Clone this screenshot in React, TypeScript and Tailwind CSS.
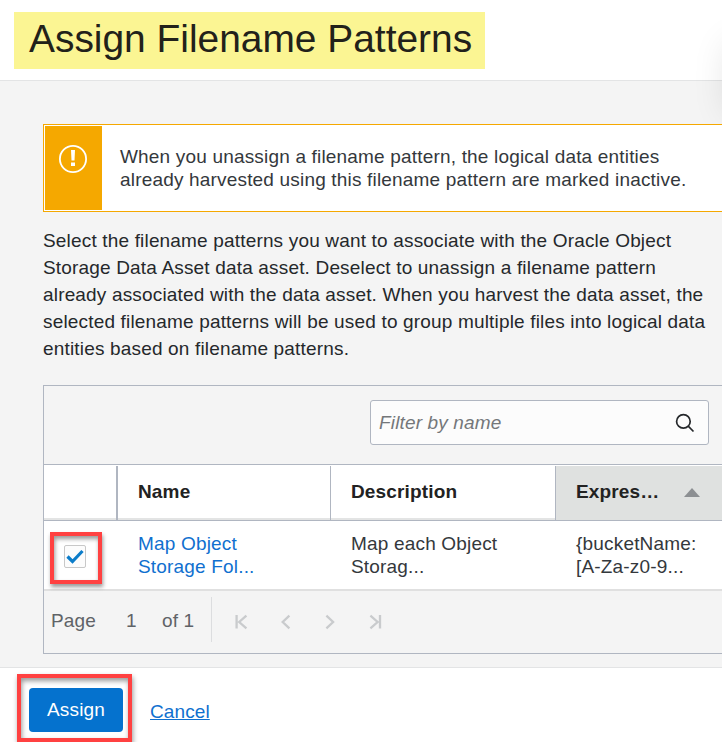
import React from "react";

const cell = "text-[19px] leading-[23px] tracking-[0.18px]";

function PagerIcon({ kind }: { kind: "first" | "prev" | "next" | "last" }) {
  const paths = {
    first: "M2.6 2V15.6M12.4 2.7L5.2 9L12.4 15.3",
    prev: "M10.4 2.7L3.7 9L10.4 15.3",
    next: "M2.4 2.7L9.1 9L2.4 15.3",
    last: "M1.4 2.7L8.6 9L1.4 15.3M11 2V15.6",
  };
  return (
    <svg width="14" height="17" viewBox="0 0 14 17" fill="none" stroke="#c9cbcd" strokeWidth="2.3">
      <path d={paths[kind]} />
    </svg>
  );
}

export default function App() {
  return (
    <div className="relative flex h-[742px] w-[722px] flex-col overflow-hidden bg-[#f4f4f4] font-['Liberation_Sans',Arial,sans-serif] text-[#34383c]">
      <header className="h-[81px] shrink-0 border-b border-[#e3e4e5] bg-white pt-3 pl-3.5">
        <h1 className="h-[57px] w-[471px] bg-[#fbf593] pl-[15px] text-[38.9px] leading-[53px] whitespace-nowrap text-[#22211a]">
          Assign Filename Patterns
        </h1>
      </header>
      <div className="pointer-events-none absolute top-[44px] left-[728px] h-[70px] w-20 shadow-[0_0_36px_rgba(0,0,0,0.12)]" />

      <main className="flex h-[586px] shrink-0 flex-col pt-[43px] pl-[43px]">
        <section className="relative flex h-[88px] shrink-0 border border-r-0 border-[#f5a800] bg-white py-px pl-px">
          <div className="w-[57px] shrink-0 bg-[#f5a800] pt-[19px] pl-3.5">
            <svg width="28" height="28" viewBox="0 0 28 28" fill="none">
              <circle cx="14" cy="14" r="13.1" stroke="white" strokeWidth="1.8" />
              <path d="M12 5H16L15.5 15.5H12.5ZM12 17.5H16V21H12Z" fill="white" />
            </svg>
          </div>
          <p className={`${cell} pt-[19px] pl-[18px] whitespace-nowrap`}>
            When you unassign a filename pattern, the logical data entities
            <br />
            already harvested using this filename pattern are marked inactive.
          </p>
        </section>

        <p className="mt-[15px] h-[135px] shrink-0 text-[19px] leading-[27px] tracking-[0.17px] whitespace-nowrap text-[#25282b]">
          Select the filename patterns you want to associate with the Oracle Object
          <br />
          Storage Data Asset data asset. Deselect to unassign a filename pattern
          <br />
          already associated with the data asset. When you harvest the data asset, the
          <br />
          selected filename patterns will be used to group multiple files into logical data
          <br />
          entities based on filename patterns.
        </p>

        <section className="mt-[23px] flex h-[269px] shrink-0 flex-col border border-r-0 border-[#b0b6c1]">
          <div className="flex h-[79px] shrink-0 justify-end border-b border-[#b0b6c1] pt-3.5 pr-[13px]">
            <div className="flex h-[45px] w-[339px] items-center justify-between rounded-[3px] border border-[#b0b6c1] bg-[#fcfcfc] pr-[13px] pl-2">
              <span className="pt-0.5 text-[19px] tracking-[0.15px] text-[#74777a] italic">Filter by name</span>
              <svg width="20" height="20" viewBox="0 0 20 20" fill="none" stroke="#25282b" strokeWidth="1.7">
                <circle cx="8.4" cy="8.4" r="6.8" />
                <path d="M13.2 13.2L18.5 18.5" />
              </svg>
            </div>
          </div>

          <div className="flex h-14 shrink-0 border-b border-[#b0b6c1] bg-white pt-px text-[19px] leading-[51px] font-bold tracking-[0.15px] text-[#222]">
            <div className="w-[74px] border-r-2 border-[#b0b6c1]">
              <div className="h-full border-b-2 border-[#e3e4e4]" />
            </div>
            <div className="w-[213px] border-r border-[#b0b6c1]">
              <div className="h-full border-b-2 border-[#e3e4e4] pl-5">Name</div>
            </div>
            <div className="w-[225px] border-r border-[#b0b6c1]">
              <div className="h-full border-b-2 border-[#e3e4e4] pl-5">Description</div>
            </div>
            <div className="flex flex-1 justify-between bg-[#dfe1e0] pr-[22px] pl-5">
              <span>Expres…</span>
              <svg className="mt-[22px]" width="16" height="9" viewBox="0 0 16 9">
                <path d="M8 0L16 9H0Z" fill="#8c8f92" />
              </svg>
            </div>
          </div>

          <div className="flex h-[70px] shrink-0 border-b-2 border-[#e0e0e0] bg-white">
            <div className="w-[74px] pt-[11px] pl-1.5">
              <div className="flex h-[52px] w-[52px] items-center justify-center border-4 border-[#ff4141] shadow-[1px_3px_4px_rgba(0,0,0,0.4),inset_1px_3px_4px_rgba(0,0,0,0.4)]">
                <div className="mr-0.5 mb-[3px] flex h-[23px] w-[22px] items-center justify-center rounded-[2px] border border-[#c8c8c8] bg-[#fcfcfc]">
                  <svg width="18" height="16" viewBox="0 0 18 16" fill="none" stroke="#0b7cc9" strokeWidth="3.2">
                    <path d="M1.5 7.5L6.5 12.5L16.5 2" />
                  </svg>
                </div>
              </div>
            </div>
            <div className={`${cell} w-[213px] pt-[11px] pl-5 text-[#1070cf]`}>
              Map Object
              <br />
              Storage Fol...
            </div>
            <div className={`${cell} w-[225px] pt-[11px] pl-5`}>
              Map each Object
              <br />
              Storag...
            </div>
            <div className={`${cell} flex-1 pt-[11px] pl-5`}>
              {"{bucketName:"}
              <br />
              [A-Za-z0-9...
            </div>
          </div>

          <div className="flex flex-1 pt-1.5 text-[19px] leading-[47px] tracking-[0.15px] text-[#5f6367]">
            <span className="w-[74px] pl-[7px]">Page</span>
            <span className="w-9 pl-2">1</span>
            <span className="w-[57px] pl-2">of 1</span>
            <div className="flex h-[45px] items-start gap-[31px] border-l border-[#dcdddf] pt-4 pl-[22px]">
              <PagerIcon kind="first" />
              <PagerIcon kind="prev" />
              <PagerIcon kind="next" />
              <PagerIcon kind="last" />
            </div>
          </div>
        </section>
      </main>

      <footer className="flex h-[75px] shrink-0 border-t border-[#e3e4e5] bg-white pt-1.5 pl-[17px]">
        <div className="h-[68px] w-[115px] shrink-0 border-4 border-[#ff4141] pt-[10px] pl-2 shadow-[1px_3px_5px_rgba(0,0,0,0.4),inset_1px_3px_5px_rgba(0,0,0,0.4)]">
          <button className="block h-11 w-[94px] rounded-[4px] bg-[#0572ce] text-[19px] font-medium tracking-[0.2px] text-white">
            Assign
          </button>
        </div>
        <a className="ml-[18px] pt-[26px] text-[19px] leading-[23px] tracking-[0.1px] text-[#1070cf] underline">Cancel</a>
      </footer>
    </div>
  );
}
